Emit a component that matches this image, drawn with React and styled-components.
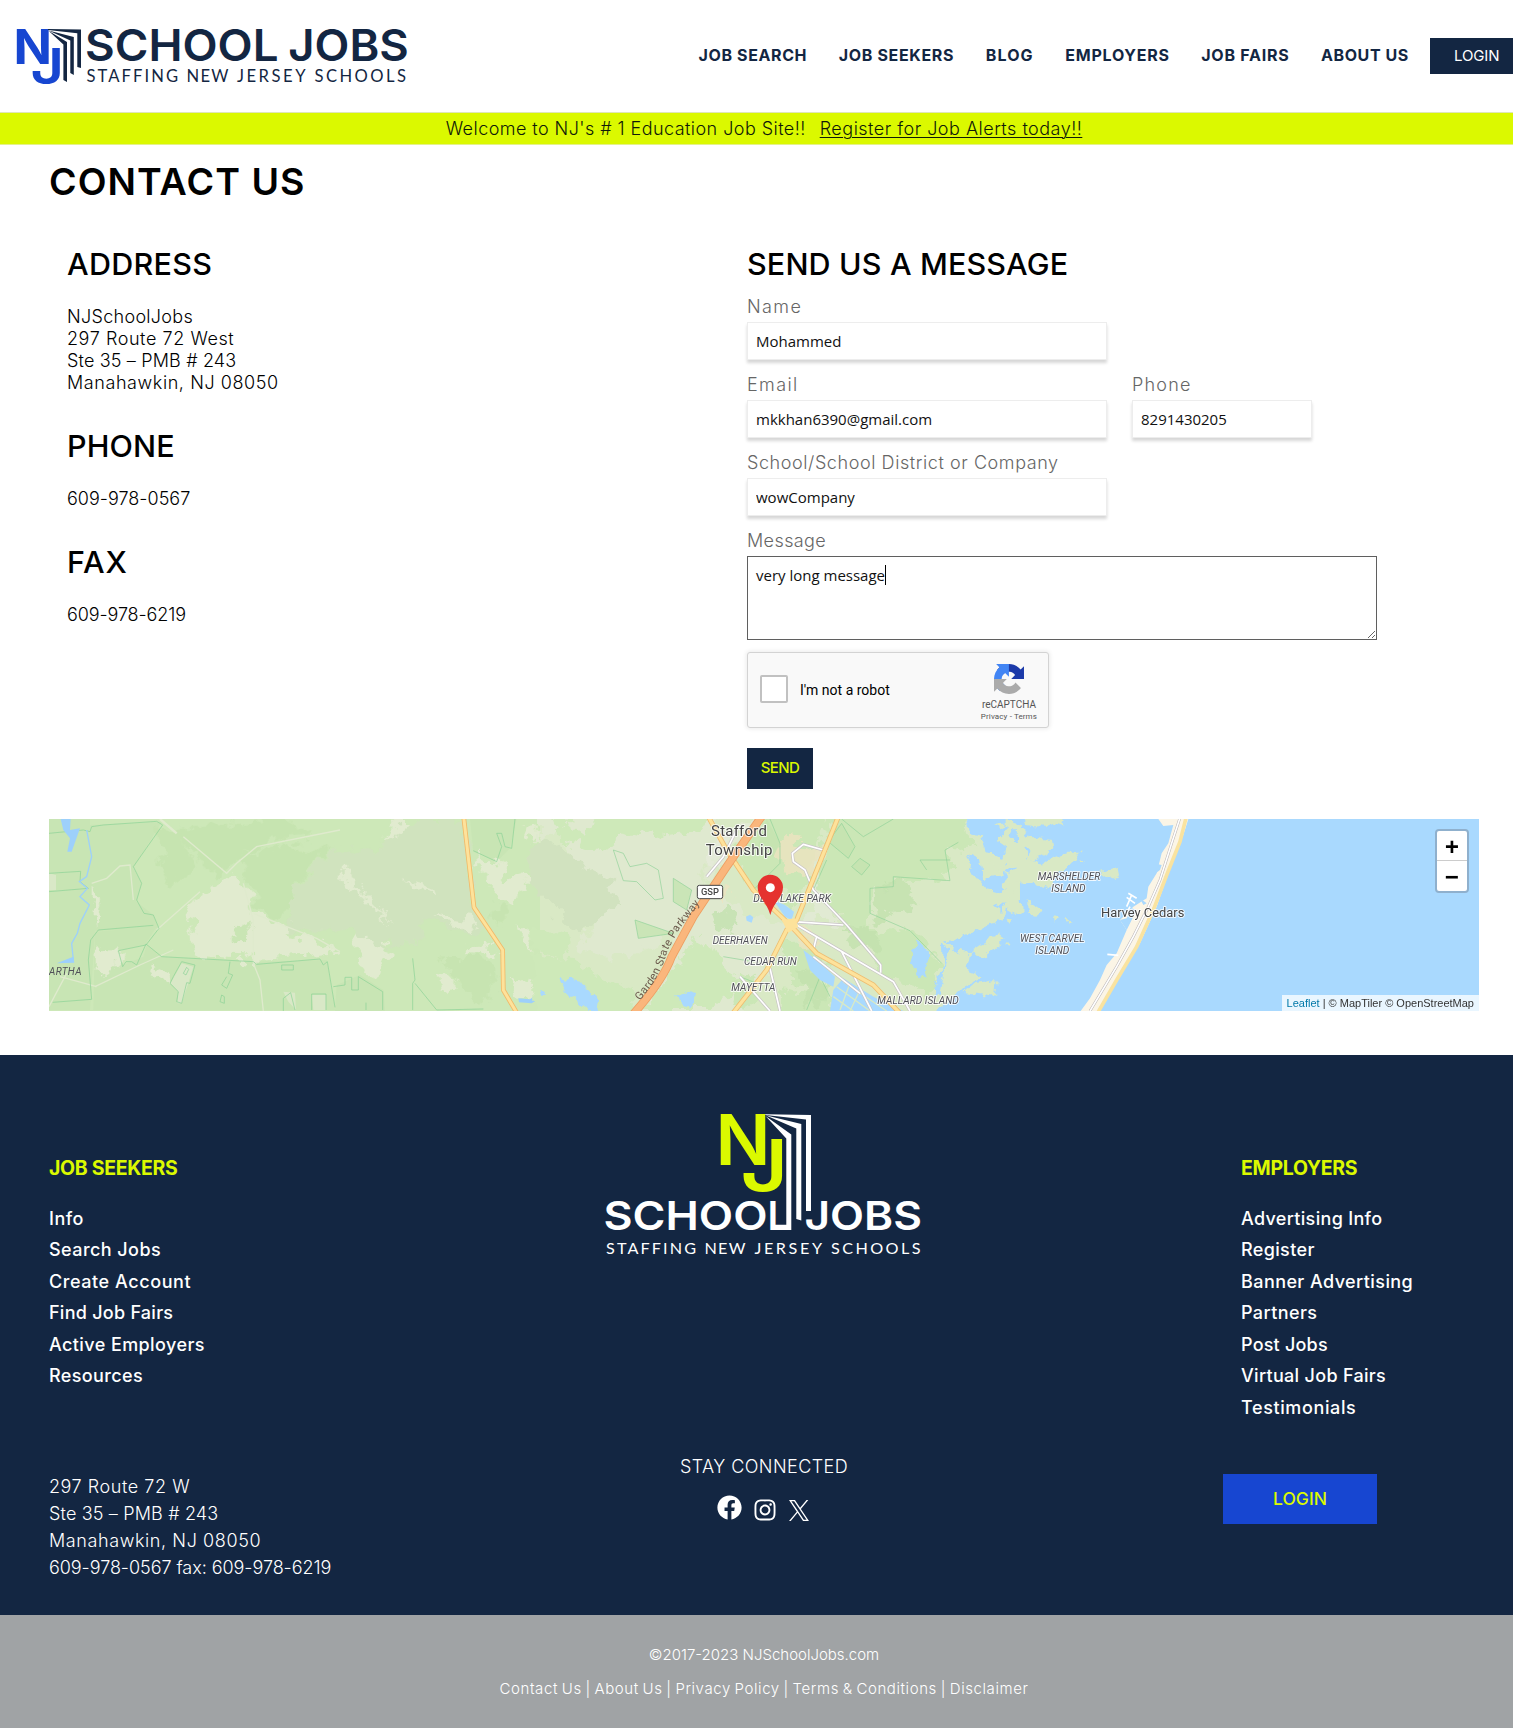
import React from 'react';
import styled, { createGlobalStyle } from 'styled-components';
import { FaFacebook, FaInstagram } from 'react-icons/fa';

const NAVY = '#132642';
const LIME = '#dbf900';
const SANS = 'Inter, "Open Sans", sans-serif';

const GlobalStyle = createGlobalStyle`
  * { box-sizing: border-box; }
  body { margin: 0; background: #fff; color: #000; font-family: ${SANS}; overflow-x: hidden; }
  h1, h2, h3, p, ul { margin: 0; padding: 0; }
  ul { list-style: none; }
  a { color: inherit; text-decoration: none; }
`;

/* Letter-spacing differs from phrase to phrase */
const Tracked = styled.span`
  letter-spacing: ${(p) => p.$ls || 0}px;
  white-space: nowrap;
`;

/* ---------- header ---------- */
const Header = styled.header`
  display: flex;
  align-items: center;
  height: 112px;
  padding-left: 10px;
  overflow: hidden;
`;
const HeaderLogo = styled.svg`
  flex: none;
  width: 405px;
  height: 112px;
`;
const Nav = styled.nav`
  display: flex;
  flex: none;
  align-items: center;
  gap: 31.5px;
  margin-left: 283.5px;
  padding-bottom: 2px;
  color: ${NAVY};
  font-size: 16px;
  font-weight: 700;
  line-height: 24px;
`;
const LoginTop = styled.a`
  flex: none;
  margin-left: 21.5px;
  width: 94px;
  padding-left: 23.5px;
  background: ${NAVY};
  color: #fff;
  font-size: 15px;
  font-weight: 400;
  line-height: 36px;
  letter-spacing: -0.1px;
`;
const Banner = styled.div`
  display: flex;
  justify-content: center;
  gap: 14px;
  height: 33px;
  padding: 0 34px 0 49px;
  border-top: 1px solid #dfe6b8;
  border-bottom: 1px solid #e4f28a;
  background: ${LIME};
  color: #101a08;
  font-size: 18px;
  font-weight: 300;
  line-height: 31px;
`;
const BannerLink = styled.a`
  text-decoration: underline;
  text-decoration-thickness: 1px;
  text-underline-offset: 2px;
`;

/* ---------- contact ---------- */
const Main = styled.main`
  padding: 17px 34px 44px 49px;
`;
const Title = styled.h1`
  font-size: 37.5px;
  font-weight: 600;
  line-height: 40px;
  letter-spacing: 1.05px;
`;
const Columns = styled.div`
  display: grid;
  grid-template-columns: 698px 1fr;
  margin-top: 44px;
`;
const Info = styled.div`
  padding-left: 18px;
`;
const Heading = styled.h2`
  font-size: 30.5px;
  font-weight: 500;
  line-height: 36px;
  letter-spacing: ${(p) => p.$ls}px;
`;
const InfoBlock = styled.section`
  margin-bottom: 34px;
`;
const InfoLines = styled.div`
  display: flex;
  flex-direction: column;
  margin-top: 24px;
  font-size: 18px;
  font-weight: 300;
  line-height: 22px;
`;
const Form = styled.form`
  display: flex;
  flex-direction: column;
  align-items: flex-start;
`;
const FieldRow = styled.div`
  display: flex;
  gap: 25px;
  margin-top: 14px;
`;
const Field = styled.label`
  display: flex;
  flex-direction: column;
  gap: 4px;
  width: ${(p) => p.$w}px;
  color: #666;
  font-size: 18px;
  font-weight: 300;
  line-height: 22px;
`;
const Input = styled.input`
  width: 100%;
  height: 38px;
  padding: 0 8px;
  border: 1px solid #ededed;
  border-radius: 0;
  outline: 0;
  box-shadow: 0 3px 3px rgba(0, 0, 0, 0.16);
  background: #fff;
  color: #111;
  font: 15px "Open Sans", sans-serif;
`;
const MessageBox = styled.div`
  position: relative;
  height: 84px;
`;
const TextArea = styled.textarea`
  display: block;
  width: 100%;
  height: 84px;
  padding: 8px 8px;
  border: 1px solid #5f5f5f;
  border-radius: 0;
  outline: 0;
  color: #111;
  font: 15px/20px "Open Sans", sans-serif;
`;
const Caret = styled.i`
  position: absolute;
  left: 138px;
  top: 9px;
  width: 1px;
  height: 20px;
  background: #000;
`;
const Captcha = styled.div`
  display: flex;
  align-items: center;
  width: 302px;
  height: 76px;
  margin-top: 12px;
  padding: 0 11px 0 12px;
  border: 1px solid #d3d3d3;
  border-radius: 3px;
  box-shadow: 0 0 4px 1px rgba(0, 0, 0, 0.08);
  background: #f9f9f9;
  font-family: Roboto, sans-serif;
`;
const CheckBox = styled.span`
  width: 28px;
  height: 28px;
  margin-bottom: 2px;
  border: 2px solid #c1c1c1;
  border-radius: 2px;
  background: #fff;
`;
const RobotText = styled.span`
  flex: 1;
  margin-left: 12px;
  font-size: 14px;
`;
const CaptchaBrand = styled.div`
  display: flex;
  flex-direction: column;
  align-items: center;
  padding-top: 7px;
  color: #555;
  font-size: 10px;
  line-height: 12px;
  svg { width: 30px; height: 30px; margin-bottom: 5px; }
`;
const CaptchaTerms = styled.span`
  font-size: 8px;
  line-height: 12px;
  letter-spacing: 0.12px;
`;
const Send = styled.button`
  width: 66px;
  height: 41px;
  margin-top: 20px;
  padding: 0 0 2px;
  border: 0;
  background: ${NAVY};
  color: ${LIME};
  font: 500 15px ${SANS};
  letter-spacing: -0.6px;
`;

/* ---------- map ---------- */
const MapFrame = styled.div`
  position: relative;
  height: 192px;
  margin-top: 30px;
  overflow: hidden;
  background: #a9d9fe;
  > svg { display: block; width: 1430px; height: 192px; }
`;
const ZoomControl = styled.div`
  position: absolute;
  top: 10px;
  right: 10px;
  width: 34px;
  border: 2px solid #8fb0cd;
  border-radius: 4px;
  background: #fff;
`;
const ZoomButton = styled.a`
  display: block;
  height: 30px;
  border-bottom: ${(p) => (p.$divided ? '1px solid #ccc' : '0')};
  font: bold 24px/35px "Liberation Mono", monospace;
  text-align: center;
`;
const Attribution = styled.div`
  position: absolute;
  right: 0;
  bottom: 0;
  padding: 0 5px;
  background: rgba(255, 255, 255, 0.75);
  color: #333;
  font: 11px/16px "Liberation Sans", Arial, sans-serif;
  a { color: #0078a8; }
`;

/* ---------- footer ---------- */
const Footer = styled.footer`
  display: grid;
  grid-template-columns: 500px 430px 1fr;
  height: 560px;
  padding-left: 49px;
  background: ${NAVY};
  color: #fff;
`;
const FooterColumn = styled.div`
  padding: 101px 0 0 ${(p) => p.$indent || 0}px;
`;
const FooterTitle = styled.h3`
  margin-bottom: 22.5px;
  color: ${LIME};
  font-size: 19.5px;
  font-weight: 700;
  line-height: 24px;
  letter-spacing: -0.3px;
`;
const FooterLinks = styled.ul`
  font-size: 18px;
  font-weight: 500;
  line-height: 31.5px;
`;
const FooterAddress = styled.address`
  display: flex;
  flex-direction: column;
  margin-top: 81.5px;
  font-size: 18px;
  font-style: normal;
  font-weight: 300;
  line-height: 27px;
`;
const FooterCenter = styled.div`
  display: flex;
  flex-direction: column;
  align-items: center;
  padding-top: 35px;
`;
const FooterLogo = styled.svg`
  width: 340px;
  height: 170px;
`;
const Stay = styled.p`
  margin-top: 195px;
  font-size: 18px;
  font-weight: 300;
  line-height: 24px;
`;
const Social = styled.div`
  display: flex;
  gap: 11.5px;
  align-items: flex-end;
  margin-top: 16px;
  margin-right: 3px;
  svg { display: block; }
  svg:first-child { margin-bottom: 2px; }
  svg:last-child { margin-bottom: 1px; }
`;
const FooterLogin = styled.a`
  display: block;
  width: 154px;
  margin: 51px 0 0 -18px;
  background: #1746d1;
  color: ${LIME};
  font-size: 17.5px;
  font-weight: 500;
  line-height: 50px;
  text-align: center;
`;
const Legal = styled.div`
  display: flex;
  flex-direction: column;
  align-items: center;
  height: 113px;
  padding: 22.5px 34px 0 49px;
  background: #a0a3a5;
  color: #fff;
  font-size: 15px;
  font-weight: 300;
  line-height: 34px;
`;
const LegalLinks = styled.p`
  letter-spacing: 0.58px;
  word-spacing: -1px;
  white-space: nowrap;
`;

const NAV = [
  ['JOB SEARCH', 0.62],
  ['JOB SEEKERS', 0.66],
  ['BLOG', 1.15],
  ['EMPLOYERS', 0.76],
  ['JOB FAIRS', 0.75],
  ['ABOUT US', 0.6],
];
const INFO = [
  ['ADDRESS', 0.3, [['NJSchoolJobs', 0.3], ['297 Route 72 West', 0.57], ['Ste 35 – PMB # 243', 0.16], ['Manahawkin, NJ 08050', 0.58]]],
  ['PHONE', 0.1, [['609-978-0567', 0.02]]],
  ['FAX', 0.8, [['609-978-6219', -0.1]]],
];
const SEEKERS = [
  ['Info', 0.5], ['Search Jobs', 0.44], ['Create Account', 0.57],
  ['Find Job Fairs', 0.26], ['Active Employers', 0.41], ['Resources', 0.38],
];
const EMPLOYERS = [
  ['Advertising Info', 0.32], ['Register', 0.36], ['Banner Advertising', 0.42], ['Partners', 0.4],
  ['Post Jobs', 0.2], ['Virtual Job Fairs', 0.31], ['Testimonials', 0.62],
];
const OFFICE = [
  ['297 Route 72 W', 0.55], ['Ste 35 – PMB # 243', 0.16],
  ['Manahawkin, NJ 08050', 0.6], ['609-978-0567 fax: 609-978-6219', -0.05],
];

function LinkList({ items }) {
  return (
    <FooterLinks>
      {items.map(([t, ls]) => (
        <li key={t}><Tracked as="a" $ls={ls}>{t}</Tracked></li>
      ))}
    </FooterLinks>
  );
}

function Word({ x, y, w, children, ...rest }) {
  return (
    <text x={x} y={y} textLength={w} lengthAdjust="spacingAndGlyphs" {...rest}>{children}</text>
  );
}

function BrandWide() {
  return (
    <HeaderLogo viewBox="10 0 405 112">
      <g fill="#1746d1" fontFamily="Inter" fontWeight="700">
        <Word x="13.5" y="64.3" w="38.5" fontSize="48.5">N</Word>
        <Word x="30.6" y="84" w="33.5" fontSize="50" fontWeight="600">J</Word>
      </g>
      <g fill={NAVY}>
        <path d="M48 29L81 29.5V68L77.3 67V33.2L48 30Z" />
        <path d="M48.5 30.5L73.8 37V75L70.3 73V40.5Z" />
        <path d="M48.5 30.8L67 42V82L63.4 80V44.6Z" />
        <g fontFamily="Inter" fontSize="44" fontWeight="600">
          <Word x="85" y="61.3" w="193.5">SCHOOL</Word>
          <Word x="288.3" y="61.3" w="120.5">JOBS</Word>
        </g>
        <g fontFamily="Lato" fontSize="16.6">
          <text x="86.5" y="82" textLength="91.5">STAFFING</text>
          <text x="186.5" y="82" textLength="42">NEW</text>
          <text x="237" y="82" textLength="68.5">JERSEY</text>
          <text x="314.5" y="82" textLength="91.5">SCHOOLS</text>
        </g>
      </g>
    </HeaderLogo>
  );
}

function BrandStacked() {
  return (
    <FooterLogo viewBox="594 1090 340 170">
      <g fill={LIME} fontFamily="Inter" fontWeight="600">
        <Word x="715.5" y="1165.3" w="55" fontSize="70.5">N</Word>
        <Word x="740.5" y="1190.8" w="47.5" fontSize="71">J</Word>
      </g>
      <g fill="#fff">
        <path d="M765 1114.3L811 1115V1211H806V1119.5L765.5 1115Z" />
        <path d="M765.5 1115.3L801.3 1124V1220.5L796.3 1219V1128.5Z" />
        <path d="M765.5 1116L791.3 1134.5V1230H771V1224.8H786.3V1138.5Z" />
        <g fontFamily="Inter" fontSize="40" fontWeight="600">
          <Word x="603.5" y="1230" w="164">SCHOO</Word>
          <Word x="767.5" y="1230" w="22">L</Word>
          <Word x="804.5" y="1230" w="117.5">JOBS</Word>
        </g>
        <g fontFamily="Lato" fontSize="16.2">
          <text x="606" y="1254.2" textLength="90">STAFFING</text>
          <text x="704.5" y="1254.2" textLength="41">NEW</text>
          <text x="754.5" y="1254.2" textLength="67.5">JERSEY</text>
          <text x="831" y="1254.2" textLength="89.5">SCHOOLS</text>
        </g>
      </g>
    </FooterLogo>
  );
}

function XMark() {
  return (
    <svg width="20" height="21" viewBox="0 0 24 24" fill="#fff" preserveAspectRatio="none">
      <path d="M14.258 10.152L23.176 0h-2.113l-7.747 8.813L7.133 0H0l9.352 13.328L0 23.973h2.113l8.176-9.309 6.531 9.309h7.133zm-2.895 3.293l-.949-1.328L2.875 1.56h3.246l6.086 8.523.945 1.328 7.91 11.078h-3.246zm0 0" />
    </svg>
  );
}

function RecaptchaMark() {
  return (
    <svg viewBox="0 0 64 64">
      <path fill="#1c3aa9" d="M64 31.955l-.033-1.37V4.687l-7.16 7.16C50.948 4.674 42.033.093 32.05.093c-10.4 0-19.622 4.96-25.458 12.64l11.736 11.86a15.55 15.55 0 0 1 4.754-5.334c2.05-1.6 4.952-2.906 8.968-2.906.485 0 .86.057 1.135.163 4.976.393 9.288 3.14 11.828 7.124l-8.307 8.307L64 31.953" />
      <path fill="#4285f4" d="M31.862.094l-1.37.033H4.594l7.16 7.16C4.58 13.147 0 22.06 0 32.046c0 10.4 4.96 19.622 12.64 25.458L24.5 45.768a15.55 15.55 0 0 1-5.334-4.754c-1.6-2.05-2.906-4.952-2.906-8.968 0-.485.057-.86.163-1.135.393-4.976 3.14-9.288 7.124-11.828l8.307 8.307L31.86.095" />
      <path fill="#ababab" d="M.001 32.045l.033 1.37v25.898l7.16-7.16c5.86 7.173 14.774 11.754 24.76 11.754 10.4 0 19.622-4.96 25.458-12.64l-11.736-11.86a15.55 15.55 0 0 1-4.754 5.334c-2.05 1.6-4.952 2.906-8.968 2.906-.485 0-.86-.057-1.135-.163-4.976-.393-9.288-3.14-11.828-7.124l8.307-8.307c-10.522.04-22.4.066-27.295-.005" />
    </svg>
  );
}

const haloText = { stroke: '#fff', strokeOpacity: 0.8, paintOrder: 'stroke', strokeLinejoin: 'round' };

function MapDrawing() {
  return (
    <svg viewBox="0 0 1430 192" fontFamily="Roboto">
      <defs>
        {/* roughens the outlines of woods and shores */}
        <filter id="rough" x="-5%" y="-5%" width="110%" height="110%">
          <feTurbulence type="fractalNoise" baseFrequency="0.022" numOctaves="4" seed="4" />
          <feDisplacementMap in="SourceGraphic" scale="75" xChannelSelector="R" yChannelSelector="G" />
        </filter>
        <filter id="shore" x="-5%" y="-5%" width="110%" height="110%">
          <feTurbulence type="fractalNoise" baseFrequency="0.035" numOctaves="3" seed="9" />
          <feDisplacementMap in="SourceGraphic" scale="32" xChannelSelector="R" yChannelSelector="G" />
        </filter>
      </defs>
      {/* western pinelands */}
      <g transform="translate(-9 -9) scale(.33333)">
        <path fill="#cde8b8" d="M0 0H1520V620H0Z" />
        <path fill="#c8e5b4" d="M27 27H150V600H27ZM150 45L365 35L280 175L305 220L290 275L340 315L355 355L165 362L150 600ZM165 365L350 350L315 405L240 420L250 465L310 440L320 405L365 440L640 455L860 450L885 600H160ZM890 525L960 495L1030 540L1035 603H885ZM1290 27H1430L1410 115L1370 155L1300 125Z" />
        <g filter="url(#rough)">
          <path fill="#c6e4b0" d="M350 60L580 40L720 30L820 80L680 95L560 180L520 190L430 90L480 180L400 220L370 170ZM600 150L700 100L870 120L760 220L750 300L700 320L650 290Z" />
          <path fill="#d0e3be" d="M1070 40L1270 20L1300 280L1360 370L1290 370L1150 330L1160 400L1000 405L950 380L880 340L830 370L740 360L760 230L880 115L1000 130Z" />
          <path fill="#c4e2ae" d="M1370 265L1400 300L1390 340L1350 320ZM1200 450L1330 440L1370 500L1340 590L1280 540Z" opacity=".7" />
          <path fill="#e1ebcf" d="M575 190L610 220L640 310L760 350L740 372L790 385L860 400L880 430L800 440L640 450L470 440L440 300L480 245ZM945 375L1000 400L1060 420L1030 470L1000 510L960 460ZM1310 130L1370 160L1400 210L1475 190L1450 240L1430 300L1390 270L1330 210ZM1020 90L1070 30H1110L1080 60ZM170 415L235 420L230 465L200 495L170 490ZM155 230L175 240L180 330L155 350ZM340 460L380 470L400 520L370 530ZM1430 340L1480 370L1490 420L1450 400ZM1290 410L1380 420L1370 440L1290 430ZM1205 490L1240 500V550L1210 540ZM900 185L930 185L950 230L1060 340L1020 310L940 240L900 210ZM1100 205L1150 220L1175 260L1130 245ZM1180 315L1300 330L1310 370L1240 345ZM1400 500L1500 550L1440 570ZM1450 50L1500 40V100L1460 90Z" />
          <path fill="#c9e5b4" d="M565 365L620 335L635 380L580 395Z" />
        </g>
        <path fill="#dfe9cf" d="M27 190L48 195V240H27ZM730 545L765 548L768 600L745 575ZM815 555H858V600H820ZM425 460L460 470L445 520L425 580H412L415 545L392 520Z" opacity=".7" />
        <g fill="none" stroke="#dfeacd" strokeWidth="4">
          <path d="M430 80L560 190L590 160L650 110L900 60M350 360L480 245M155 220L200 205L240 168L270 165L280 270M640 460L660 510L670 603M165 530L300 465L400 420M60 500L170 530M27 590L80 490M640 310L740 350L830 385L900 425M610 220L640 330V460" />
          <path d="M360 27L410 70" strokeWidth="7" />
        </g>
        <g fill="none" stroke="#8ad296" strokeWidth="2">
          <path d="M27 70L130 60L150 65L155 50L190 45L350 34L368 45L280 170L305 220L290 270L312 310L340 315L357 355L318 405L235 422L248 470L258 455L275 455L290 465L318 402L365 440L640 455L650 463L840 447L850 465L862 455L885 592M340 346L175 360L152 390L145 450L155 568L38 577M27 190L122 184L120 215L145 235L27 245M425 455L465 465L450 520L440 518L425 580L410 575L415 545L390 520L400 500ZM430 490L440 472L446 478L438 495ZM570 455L565 490L578 495L560 535L545 525L560 500M725 465H760V480H725ZM730 603V565L752 548L765 600M858 600V552H815V600M880 530L915 525V502H935L935 540L955 540V500L1028 545V600M1118 445L1125 510L1118 520V600M1125 520L1190 600L1330 597M1300 122L1370 155L1385 110L1370 70L1385 70L1395 110L1415 115L1425 27M540 575L545 555L553 560V580ZM978 578V600" />
        </g>
        <path fill="#9dd0fb" d="M62 27H92L90 60L120 55L95 125H82L90 85L70 60ZM50 460L100 440L103 458ZM1435 565L1470 568L1500 545V565L1475 580L1437 577Z" />
        <path fill="none" stroke="#9dd0fb" strokeWidth="4" d="M140 60L155 140L140 200L118 215L142 235L120 260L148 285L120 340L112 370L95 400L100 450" />
        <path fill="none" stroke="#f2b967" strokeWidth="14" strokeLinejoin="round" d="M1271 20L1302 292L1388 420L1390 540L1430 608" />
        <path fill="none" stroke="#fde29b" strokeWidth="9" strokeLinejoin="round" d="M1271 20L1302 292L1388 420L1390 540L1430 608" />
      </g>

      {/* township and marshes */}
      <g transform="translate(491 -9) scale(.33333)">
        <path fill="#d9e9c5" d="M0 0H1440V620H0Z" />
        <g filter="url(#rough)">
          <path fill="#dfe9cf" d="M0 0H510L560 100L480 230L540 230L640 330L760 340L690 480L580 640H280L440 350L250 450L120 420L160 300L60 60L0 110Z" />
          <path fill="#d1e2bf" d="M-20 110L60 95L120 170L210 220L250 290L180 330L120 350L80 340L-20 230Z" />
          <path fill="#cee9b9" d="M30 0L130 80L200 0H510L480 60L350 80L260 60L180 130L60 80ZM-20 430L90 440L170 500L290 540L270 640H-20ZM400 480L470 380L540 430L600 520L510 600H300ZM-20 350L80 380L90 440L-20 420Z" />
          <path fill="#cbe7b6" d="M610 100L700 0H890L750 320L720 220L640 240L590 170ZM900 0H1270L1300 130L1220 120L1230 210L1060 205L1060 230L990 235V350L1110 360L1210 460L1170 540L1100 530L1020 490L1010 440L920 340L820 220L860 100ZM780 390L860 440L870 560L760 520L720 400ZM720 540L880 560L860 640H720ZM560 540L660 480L650 560L600 603Z" />
          <path fill="#c2e1ae" d="M530 310L570 280L600 340L550 360ZM910 360L1000 350L1010 430L920 400ZM770 480L860 500V570L800 590ZM1000 240L1100 200L1120 280L1010 340Z" opacity=".8" />
          <path fill="#ece4c0" d="M735 80L860 115L820 200L740 190L710 110ZM770 345L830 375L810 430L780 400ZM540 225L575 250L545 290Z" opacity=".8" />
          <path fill="#e9ebe2" d="M500 140L560 60L620 27H660L540 180ZM860 115L820 200L850 270L920 340L800 330Z" opacity=".5" />
        </g>
        <path fill="#c4e3b0" d="M680 27L720 100L700 140L650 120ZM880 60L905 40L945 110L925 145L870 100ZM400 205L455 240L440 300L400 275ZM285 330L400 370L295 385ZM935 170L960 145L990 165L965 195Z" opacity=".8" />
        <g fill="none" stroke="#8fd299" strokeWidth="2">
          <path d="M220 120L250 130L270 170L320 160L355 180L370 265L345 270L290 215L250 212ZM400 205L455 240L440 300L400 275ZM285 330L400 370L295 385ZM905 40L945 110L925 145L865 95ZM960 145L990 165L965 195L935 170ZM990 235L1060 230V200L1230 212L1215 120L1255 97M990 235V310L1110 362L1205 460M905 27L970 80L1060 27M1160 180L1140 150L1230 150M690 27L720 100V160L640 240M820 240L860 150M550 440L640 455M800 600L840 500L870 560M600 500L650 520" />
        </g>
        {/* bay */}
        <g fill="#a9d9fe" filter="url(#shore)">
          <path d="M1480 260L1400 285L1390 330L1340 345L1300 365L1260 390L1250 420L1290 430L1280 480L1330 500L1270 530L1240 560L1190 590L1170 640H1480Z" />
          <path d="M1275 0H1480V80L1400 60L1370 90L1400 110L1390 140L1340 130L1330 80L1290 70ZM1280 130L1320 150L1330 210L1390 190L1400 150L1480 170V200L1400 210L1380 250L1340 240L1300 190ZM1360 290L1400 275L1380 305ZM1130 385L1165 430L1150 470L1160 500L1140 500L1110 460ZM1205 400L1225 410L1200 560H1175L1210 470ZM1220 395L1300 370L1250 430Z" />
          <path d="M60 500L120 515L180 570L175 603H150L80 550ZM400 565L440 540L480 560L450 595ZM0 540L15 550L0 560Z" />
        </g>
        <path fill="#a9d9fe" d="M700 270L735 285L762 305L755 330L735 320ZM790 420L830 450L885 500L880 530L840 510L810 480ZM880 540L910 505L1000 560L1090 603H870ZM618 320L630 314L640 322L635 338L620 332Z" />
        <g fill="#d9e9c5" filter="url(#shore)">
          <path d="M1300 100L1330 95L1325 115ZM1355 45L1400 40L1390 55ZM1345 160L1385 165L1370 185ZM1400 85L1425 85L1420 130L1405 110ZM1290 430L1380 370L1400 385L1330 440ZM1270 545L1300 520L1370 510L1365 560Z" />
        </g>
        <g fill="none" stroke="#d9e9c5" strokeWidth="4">
          <path d="M890 530L990 603M910 515L1040 603M930 520L900 600M960 540L930 603M880 560L940 603" />
        </g>
        {/* local roads */}
        <g fill="none" stroke="#c8c3c6" strokeWidth="9" strokeLinejoin="round">
          <path d="M850 120L790 103L757 130L760 155L795 180L820 240L920 345L1022 465V488M770 345L830 380L1000 480L1060 515L1110 603M760 335L910 345M830 380L820 420M905 425L995 603M500 200L550 140L590 60M690 475L720 603M600 500L690 603M820 440L960 550" />
        </g>
        <g fill="none" stroke="#fff" strokeWidth="5" strokeLinejoin="round">
          <path d="M850 120L790 103L757 130L760 155L795 180L820 240L920 345L1022 465V488M770 345L830 380L1000 480L1060 515L1110 603M760 335L910 345M830 380L820 420M905 425L995 603M500 200L550 140L590 60M690 475L720 603M600 500L690 603M820 440L960 550" />
        </g>
        <g fill="none" strokeLinejoin="round">
          <path stroke="#efbd70" strokeWidth="15" d="M505 20L560 120L640 240L750 345L830 430L1000 525L1080 610M895 20L770 330L740 360L680 480L580 608" />
          <path stroke="#fde29b" strokeWidth="10" d="M505 20L560 120L640 240L750 345L830 430L1000 525L1080 610M895 20L770 330L740 360L680 480L580 608" />
          <path stroke="#ee9f62" strokeWidth="25" d="M668 15L560 170L460 320L395 440Q370 510 280 612" />
          <path stroke="#fab67c" strokeWidth="20" d="M668 15L560 170L460 320L395 440Q370 510 280 612" />
        </g>
        <path fill="#fde29b" d="M725 330L765 325L775 350L745 368Z" />
        <rect x="472" y="226" width="76" height="40" rx="6" fill="#fff" stroke="#444" strokeWidth="3" />
        <text x="510" y="256" fontSize="28" fontWeight="500" textAnchor="middle" fill="#444">GSP</text>
        <g fill="#444" textAnchor="middle" strokeWidth="6" {...haloText}>
          <text x="597" y="78" fontSize="45" textLength="168">Stafford</text>
          <text x="597" y="136" fontSize="45" textLength="200">Township</text>
        </g>
        <g fill="#505058" fontSize="30" fontStyle="italic" strokeWidth="6" {...haloText}>
          <text x="640" y="276" textLength="233" lengthAdjust="spacingAndGlyphs">DEER LAKE PARK</text>
          <text x="518" y="402" textLength="165" lengthAdjust="spacingAndGlyphs">DEERHAVEN</text>
          <text x="612" y="465" textLength="158" lengthAdjust="spacingAndGlyphs">CEDAR RUN</text>
          <text x="574" y="543" textLength="132" lengthAdjust="spacingAndGlyphs">MAYETTA</text>
          <text x="1012" y="583" textLength="244" lengthAdjust="spacingAndGlyphs">MALLARD ISLAND</text>
        </g>
        <path id="parkway" fill="none" d="M300 572L340 520Q370 470 383 420L420 355L480 280" />
        <text fontSize="33" fill="#6b5a4c">
          <textPath href="#parkway" textLength="345">Garden State Parkway</textPath>
        </text>
        <path fill="#e5322f" d="M691 315C680 275 653 262 653 232A38 38 0 0 1 729 232C729 262 702 275 691 315Z" />
        <circle cx="691" cy="233" r="13.5" fill="#fff" />
      </g>

      {/* barrier island */}
      <g transform="translate(961 -9) scale(.33333)">
        <path fill="#a9d9fe" d="M30 0H1420V620H30Z" />
        <g fill="#d9e9c5" filter="url(#shore)">
          <path d="M40 15H165L160 45L130 35L100 48L50 42ZM-10 27L30 40L60 80L125 90L130 120L90 140L70 150L110 155L170 125L215 125L190 160L140 190L110 240L60 215L0 220L-10 200ZM0 245L30 250L35 300L15 315L-10 300ZM50 270L95 300L80 320L55 305ZM130 315L150 325L135 340ZM165 318L188 330L170 338ZM215 150L225 155L210 158ZM270 190L325 170L330 195L300 210ZM-10 320L12 322L-5 338ZM-10 400L5 402L-10 412Z" />
        </g>
        <g fill="#a9d9fe" filter="url(#shore)">
          <path d="M10 60L30 80L20 100L0 80ZM40 110L60 120L50 140ZM-10 180L20 175L0 195Z" />
        </g>
        <path fill="#fbf5e6" d="M445 27H535L520 75L475 190L440 290L390 400L330 500L270 603H212L240 565L270 510L290 465L320 430L350 360L330 330L370 290L410 265L415 230L440 190L455 130L475 100L490 45L460 48Z" />
        <path fill="#a9d9fe" d="M420 190L432 160L455 165L450 180L430 195ZM390 265L410 280L400 285ZM330 330L350 325L365 295L380 300L350 360Z" />
        <path fill="none" stroke="#f9e3a0" strokeWidth="11" d="M529 20L510 95L470 195L432 295L380 410L320 510L265 605" />
        <path fill="none" stroke="#b9b4b6" strokeWidth="8" d="M511 20L485 100L450 210L415 290L370 380L320 470L240 603" />
        <path fill="none" stroke="#fff" strokeWidth="5" d="M511 20L485 100L450 210L415 290L370 380L320 470L240 603" />
        <path fill="none" stroke="#fff" strokeWidth="5" d="M355 250L380 265M350 262L375 280M365 255L350 290M292 433L325 436M345 320L360 290" />
        <g fill="#505058" fontSize="30" fontStyle="italic" strokeWidth="6" {...haloText}>
          <text x="83" y="210" textLength="188" lengthAdjust="spacingAndGlyphs">MARSHELDER</text>
          <text x="124" y="246" textLength="103" lengthAdjust="spacingAndGlyphs">ISLAND</text>
          <text x="30" y="395" textLength="194" lengthAdjust="spacingAndGlyphs">WEST CARVEL</text>
          <text x="76" y="431" textLength="102" lengthAdjust="spacingAndGlyphs">ISLAND</text>
        </g>
        <text x="273" y="322" fontSize="39" fill="#444" textLength="250" lengthAdjust="spacingAndGlyphs" strokeWidth="6" {...haloText}>Harvey Cedars</text>
      </g>
      <text x="0" y="156.3" fontSize="10" fontStyle="italic" fill="#505058" textLength="32.5">ARTHA</text>
    </svg>
  );
}

export default function App() {
  return (
    <>
      <GlobalStyle />
      <Header>
        <BrandWide />
        <Nav>
          {NAV.map(([t, ls]) => (
            <Tracked as="a" key={t} $ls={ls}>{t}</Tracked>
          ))}
        </Nav>
        <LoginTop>LOGIN</LoginTop>
      </Header>
      <Banner>
        <Tracked $ls={0.44}>Welcome to NJ's # 1 Education Job Site!!</Tracked>
        <BannerLink><Tracked $ls={0.49}>Register for Job Alerts today!!</Tracked></BannerLink>
      </Banner>

      <Main>
        <Title>CONTACT US</Title>
        <Columns>
          <Info>
            {INFO.map(([title, ls, lines]) => (
              <InfoBlock key={title}>
                <Heading $ls={ls}>{title}</Heading>
                <InfoLines>
                  {lines.map(([t, s]) => <Tracked key={t} $ls={s}>{t}</Tracked>)}
                </InfoLines>
              </InfoBlock>
            ))}
          </Info>
          <Form>
            <Heading $ls={0.15}>SEND US A MESSAGE</Heading>
            <FieldRow>
              <Field $w={360}>
                <Tracked $ls={1.4}>Name</Tracked>
                <Input defaultValue="Mohammed" />
              </Field>
            </FieldRow>
            <FieldRow>
              <Field $w={360}>
                <Tracked $ls={1.4}>Email</Tracked>
                <Input defaultValue="mkkhan6390@gmail.com" />
              </Field>
              <Field $w={180}>
                <Tracked $ls={1.2}>Phone</Tracked>
                <Input defaultValue="8291430205" />
              </Field>
            </FieldRow>
            <FieldRow>
              <Field $w={360}>
                <Tracked $ls={0.58}>School/School District or Company</Tracked>
                <Input defaultValue="wowCompany" />
              </Field>
            </FieldRow>
            <FieldRow>
              <Field $w={630}>
                <Tracked $ls={0.4}>Message</Tracked>
                <MessageBox>
                  <TextArea defaultValue="very long message" />
                  <Caret />
                </MessageBox>
              </Field>
            </FieldRow>
            <Captcha>
              <CheckBox />
              <RobotText>I'm not a robot</RobotText>
              <CaptchaBrand>
                <RecaptchaMark />
                <span>reCAPTCHA</span>
                <CaptchaTerms>Privacy - Terms</CaptchaTerms>
              </CaptchaBrand>
            </Captcha>
            <Send type="button">SEND</Send>
          </Form>
        </Columns>
        <MapFrame>
          <MapDrawing />
          <ZoomControl>
            <ZoomButton $divided>+</ZoomButton>
            <ZoomButton>−</ZoomButton>
          </ZoomControl>
          <Attribution><a>Leaflet</a> | © MapTiler © OpenStreetMap</Attribution>
        </MapFrame>
      </Main>

      <Footer>
        <FooterColumn>
          <FooterTitle>JOB SEEKERS</FooterTitle>
          <LinkList items={SEEKERS} />
          <FooterAddress>
            {OFFICE.map(([t, ls]) => <Tracked key={t} $ls={ls}>{t}</Tracked>)}
          </FooterAddress>
        </FooterColumn>
        <FooterCenter>
          <BrandStacked />
          <Stay><Tracked $ls={0.42}>STAY CONNECTED</Tracked></Stay>
          <Social>
            <FaFacebook size={25} />
            <FaInstagram size={24} />
            <XMark />
          </Social>
        </FooterCenter>
        <FooterColumn $indent={262}>
          <FooterTitle>EMPLOYERS</FooterTitle>
          <LinkList items={EMPLOYERS} />
          <FooterLogin>LOGIN</FooterLogin>
        </FooterColumn>
      </Footer>
      <Legal>
        <p>©2017-2023 NJSchoolJobs.com</p>
        <LegalLinks>Contact Us | About Us | Privacy Policy | Terms &amp; Conditions | Disclaimer</LegalLinks>
      </Legal>
    </>
  );
}
